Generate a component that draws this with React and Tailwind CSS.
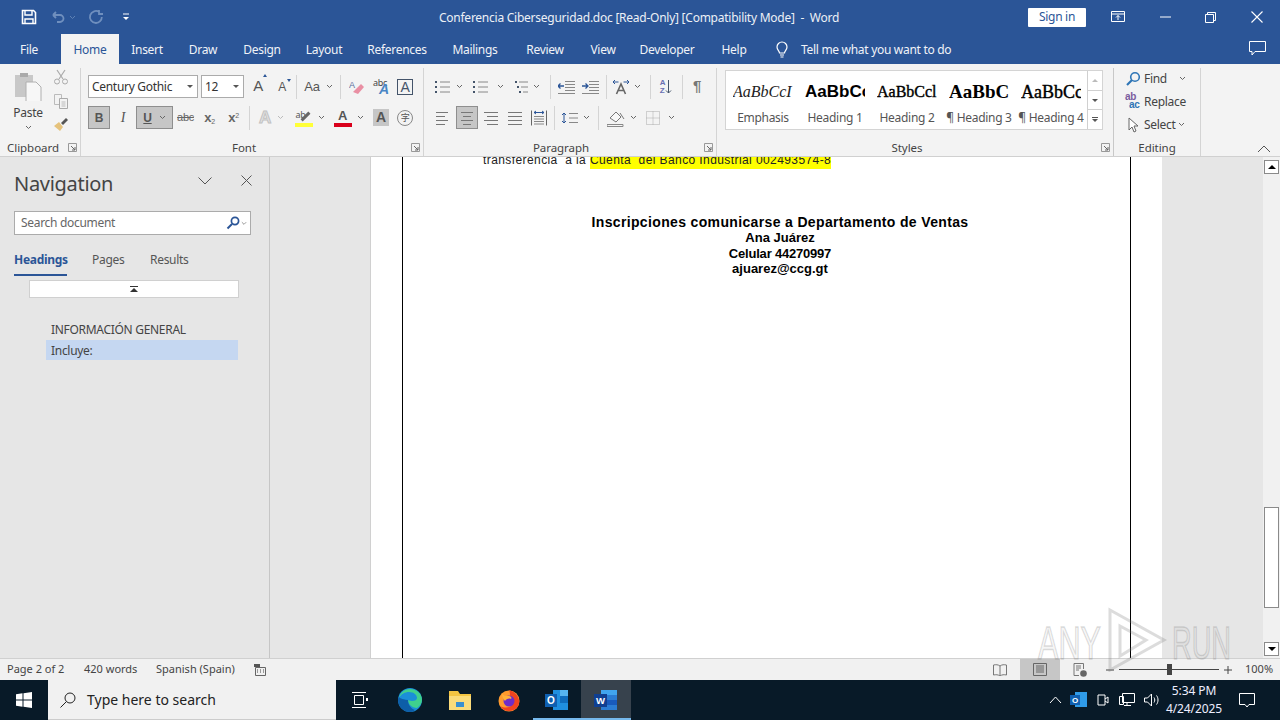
import React from "react";

const S = ({ w = 16, h = 16, vb, children, className = "" }) => (
  <svg width={w} height={h} viewBox={vb || `0 0 ${w} ${h}`} fill="none" className={"block shrink-0 " + className}>{children}</svg>
);
const Chev = ({ c = "#666", w = 7 }) => (
  <S w={w} h={5} vb="0 0 7 5"><path d="M1 1l2.5 2.5L6 1" stroke={c} strokeWidth="1" /></S>
);
const SepSm = () => <div className="w-px h-[24px] bg-[#d4d4d4]" />;
const GLabel = ({ children, launcher }) => (
  <div className="h-[18px] pt-[2px] flex items-center justify-center relative text-[11.5px] text-[#444] tracking-[-0.05px]">
    {children}
    {launcher && (
      <span className="absolute right-[3px] top-[5px]">
        <S w={9} h={9}><path d="M.5 8.5v-8h8v8z" stroke="#999" /><path d="M3 3l4 4M7 4v3H4" stroke="#666" /></S>
      </span>
    )}
  </div>
);

const Lines = ({ x1 = [2, 2, 2, 2], x2 = [16, 16, 16, 16], c = "#777" }) => (
  <S w={18} h={16}>
    {[2.5, 6.5, 10.5, 14.5].map((y, i) => <path key={i} d={`M${x1[i]} ${y}H${x2[i]}`} stroke={c} />)}
  </S>
);

function Title() {
  return (
    <div className="h-[34px] bg-[#2b5597] flex items-center text-white shrink-0">
      <div className="w-[21px]" />
      <div className="w-[16px] flex justify-center">
        <S w={16} h={16}>
          <path d="M1.5 1.5h11l2 2v11h-13z" stroke="#fff" strokeWidth="1.6" />
          <path d="M4 2v4h7V2M4 14.5V10h8v4.5" stroke="#fff" strokeWidth="1.4" />
        </S>
      </div>
      <div className="w-[13px]" />
      <S w={16} h={14}><path d="M3 5h7a3.5 3.5 0 010 7H7M3 5l3-3M3 5l3 3" stroke="#6f8fbe" strokeWidth="1.8" /></S>
      <div className="w-[3px]" />
      <Chev c="#5f82b5" />
      <div className="w-[12px]" />
      <S w={16} h={16}><path d="M11.5 3.2A6 6 0 108 14a6 6 0 005.8-6M11 1v4h4" stroke="#6f8fbe" strokeWidth="1.8" /></S>
      <div className="w-[18px]" />
      <S w={8} h={8}><path d="M1 1h6" stroke="#fff" /><path d="M1 4l3 3 3-3z" fill="#fff" /></S>
      <div className="w-[308px]" />
      <div className="w-[402px] pt-[1px] text-center text-[12px] text-[#ecf0f6] whitespace-nowrap tracking-[-0.25px]">
        Conferencia Ciberseguridad.doc [Read-Only] [Compatibility Mode]&nbsp; -&nbsp; Word
      </div>
      <div className="w-[188px]" />
      <div className="w-[58px] h-[19px] bg-white rounded-[1px] text-[#2b5597] text-[12px] flex items-center justify-center">Sign in</div>
      <div className="w-[25px]" />
      <S w={14} h={12}><path d="M.5.5h13v10H.5zM.5 3h13M7 9V4.5M5 6.5l2-2 2 2" stroke="#fff" /></S>
      <div className="w-[35px]" />
      <S w={11} h={2}><path d="M0 1h11" stroke="#fff" /></S>
      <div className="w-[34px]" />
      <S w={11} h={11}><path d="M.5 2.5h8v8h-8zM2.5 2.5v-2h8v8h-2" stroke="#fff" /></S>
      <div className="w-[35px]" />
      <S w={12} h={12}><path d="M.5.5l11 11M11.5.5l-11 11" stroke="#fff" strokeWidth="1.1" /></S>
    </div>
  );
}

function Tabs() {
  return (
    <div className="h-[30px] bg-[#2b5597] flex text-[12px] text-[#f0f3f8] whitespace-nowrap shrink-0">
      <div className="w-[58px] text-center pt-[7px]">File</div>
      <div className="w-[3px]" />
      <div className="w-[58px] text-center pt-[7px] bg-[#f3f3f3] text-[#2b5597]">Home</div>
      <div className="w-[56px] text-center pt-[7px]">Insert</div>
      <div className="w-[56px] text-center pt-[7px]">Draw</div>
      <div className="w-[62px] text-center pt-[7px]">Design</div>
      <div className="w-[62px] text-center pt-[7px]">Layout</div>
      <div className="w-[84px] text-center pt-[7px]">References</div>
      <div className="w-[72px] text-center pt-[7px]">Mailings</div>
      <div className="w-[68px] text-center pt-[7px]">Review</div>
      <div className="w-[48px] text-center pt-[7px]">View</div>
      <div className="w-[80px] text-center pt-[7px]">Developer</div>
      <div className="w-[54px] text-center pt-[7px]">Help</div>
      <div className="w-[14px]" />
      <div className="pt-[7px]">
        <S w={14} h={17}><path d="M4.5 12c0-2-2.5-3-2.5-6a5 5 0 0110 0c0 3-2.5 4-2.5 6zM5 14h4M5.5 16h3" stroke="#fff" strokeWidth="1.2" /></S>
      </div>
      <div className="w-[12px]" />
      <div className="pt-[7px]">Tell me what you want to do</div>
      <div className="w-[298px]" />
      <div className="pt-[7px]">
        <S w={17} h={15}><path d="M.5.5h16v10H6l-3 3.5v-3.500H.5z" stroke="#fff" /></S>
      </div>
    </div>
  );
}

function Clipboard() {
  return (
    <div className="w-[81px] h-[88px] border-r border-[#d4d4d4] flex flex-col shrink-0 mt-[4px]">
      <div className="h-[70px] flex">
        <div className="w-[50px] pl-[6px] flex flex-col items-center pt-[3px]">
          <S w={30} h={30}>
            <path d="M2 4h18v22H2z" fill="#c8c8c8" />
            <path d="M7 2h8v4H7z" fill="#aaa" />
            <path d="M13 11h10l5 5v15H13z" fill="#f7f7f7" stroke="#b0b0b0" />
          </S>
          <div className="text-[12px] text-[#444] leading-[16px] mt-[4px]">Paste</div>
          <div className="mt-[4px]"><Chev /></div>
        </div>
        <div className="flex flex-col items-center gap-[7.500px] ml-[3px] pt-[1px]">
          <S w={16} h={16}><path d="M4 1l6 9M12 1l-6 9" stroke="#aaa" strokeWidth="1.2" /><circle cx="4" cy="12.500" r="2.500" stroke="#aaa" /><circle cx="12" cy="12.500" r="2.500" stroke="#aaa" /></S>
          <S w={16} h={16}><path d="M1.500 1.500h7v10h-7z" stroke="#bbb" /><path d="M6.500 5.500h8v10h-8z" fill="#f3f3f3" stroke="#aaa" /><path d="M8.500 9h4M8.500 11h4M8.500 13h4" stroke="#bbb" /></S>
          <S w={16} h={16}><path d="M1 10l5-4 4 5-3 4z" fill="#e5c27c" /><path d="M8 7l5-5 2 2-5 5z" fill="#555" /></S>
        </div>
      </div>
      <GLabel launcher><span className="-ml-[14px]">Clipboard</span></GLabel>
    </div>
  );
}

const Cell = ({ className = "", children }) => <div className={"flex items-center justify-center shrink-0 h-[22px] " + className}>{children}</div>;
const FA = ({ children, className = "" }) => <span className={"font-['Liberation_Sans',sans-serif] " + className}>{children}</span>;

function Font() {
  return (
    <div className="w-[343px] h-[88px] border-r border-[#d4d4d4] flex flex-col shrink-0 mt-[4px]">
      <div className="h-[70px] flex flex-col pl-[7px]">
        <div className="flex items-center h-[23px] mt-[7px]">
          <div className="w-[110px] h-[23px] bg-white border border-[#ababab] flex items-center px-[3px] text-[12px] text-[#333] justify-between shrink-0">
            Century Gothic <span className="w-0 h-0 border-x-[3px] border-x-transparent border-t-[3px] border-t-[#555] mr-[1px]" />
          </div>
          <div className="w-[3px]" />
          <div className="w-[43px] h-[23px] bg-white border border-[#ababab] flex items-center px-[3px] text-[12px] text-[#333] justify-between shrink-0">
            12 <span className="w-0 h-0 border-x-[3px] border-x-transparent border-t-[3px] border-t-[#555] mr-[1px]" />
          </div>
          <div className="w-[2px]" />
          <Cell className="w-[24px]"><FA className="text-[15px] text-[#555] relative">A<span className="absolute -right-[4px] -top-[1px] w-0 h-0 border-x-[2.500px] border-x-transparent border-b-[3px] border-b-[#2b5597]" /></FA></Cell>
          <Cell className="w-[24px]"><FA className="text-[12px] text-[#555] relative">A<span className="absolute -right-[5px] top-[1px] w-0 h-0 border-x-[2.500px] border-x-transparent border-t-[3px] border-t-[#2b5597]" /></FA></Cell>
          <Cell className="w-[4px]"><SepSm /></Cell>
          <Cell className="w-[28px] text-[13px] text-[#555]"><FA>Aa</FA></Cell>
          <Cell className="w-[6px]"><Chev /></Cell>
          <Cell className="w-[8px]" />
          <Cell className="w-[1px]"><SepSm /></Cell>
          <Cell className="w-[4px]" />
          <Cell className="w-[24px]">
            <S w={16} h={16}><path d="M4 13l8-8 3 3-6 7z" fill="#e98fa3" /><text x="0" y="9" fontSize="9" fill="#5a6e9e" fontFamily="Liberation Sans">A</text></S>
          </Cell>
          <Cell className="w-[24px]">
            <div className="relative w-[16px] h-[18px]"><span className="absolute left-0 -top-[2px] text-[9px] text-[#444]">abc</span><FA className="absolute left-[6px] top-[5px] text-[14px] font-bold italic text-[#4a86c5] leading-[13px]">A</FA></div>
          </Cell>
          <Cell className="w-[24px]">
            <div className="w-[16px] h-[16px] border border-[#44546a] flex items-center justify-center"><FA className="text-[14px] text-[#44546a] leading-none">A</FA></div>
          </Cell>
        </div>
        <div className="flex items-center h-[23px] mt-[8px]">
          <Cell className="w-[22px] h-[23px] bg-[#c6c6c6] border border-[#8e8e8e]"><FA className="text-[12px] font-bold text-[#555]">B</FA></Cell>
          <Cell className="w-[26px]"><span className="font-['Liberation_Serif',serif] italic text-[14px] text-[#555]">I</span></Cell>
          <Cell className="w-[37px] h-[23px] bg-[#c6c6c6] border border-[#8e8e8e] gap-[7px]"><FA className="text-[12px] font-bold underline text-[#555]">U</FA><Chev /></Cell>
          <Cell className="w-[25px]"><FA className="text-[11px] line-through text-[#666]">abc</FA></Cell>
          <Cell className="w-[23px]"><FA className="text-[13px] font-bold text-[#666]">x<sub className="text-[7px] font-normal">2</sub></FA></Cell>
          <Cell className="w-[25px]"><FA className="text-[13px] font-bold text-[#666]">x<sup className="text-[7px] font-normal">2</sup></FA></Cell>
          <Cell className="w-[7px]"><SepSm /></Cell>
          <Cell className="w-[24px]"><FA className="text-[17px] font-bold text-[#e3e3e3] [-webkit-text-stroke:1px_#c2c2c2]">A</FA></Cell>
          <Cell className="w-[6px]"><Chev c="#bbb" /></Cell>
          <Cell className="w-[7px]" />
          <Cell className="w-[27px]">
            <div className="relative w-[18px] h-[18px]"><span className="absolute left-[1px] -top-[1px] text-[9px] text-[#555]">ab</span><span className="absolute left-[9px] top-[2px] w-[3px] h-[11px] bg-[#666] rotate-45" /><span className="absolute left-0 bottom-0 w-[18px] h-[4px] bg-[#ffff38]" /></div>
          </Cell>
          <Cell className="w-[9px]"><Chev /></Cell>
          <Cell className="w-[3px]" />
          <Cell className="w-[27px]">
            <div className="relative w-[18px] h-[18px] flex justify-center"><FA className="text-[13px] font-bold text-[#555] leading-[14px]">A</FA><span className="absolute left-0 bottom-0 w-[18px] h-[4px] bg-[#d9001b]" /></div>
          </Cell>
          <Cell className="w-[9px]"><Chev /></Cell>
          <Cell className="w-[4px]" />
          <Cell className="w-[24px]"><div className="w-[16px] h-[17px] bg-[#c6c6c6] flex items-center justify-center"><FA className="text-[14px] font-bold text-[#555]">A</FA></div></Cell>
          <Cell className="w-[24px]"><div className="w-[16px] h-[16px] rounded-full border border-[#888] flex items-center justify-center text-[9px] text-[#555] font-['Noto_Sans_CJK_SC',sans-serif]">字</div></Cell>
        </div>
      </div>
      <GLabel launcher><span className="-ml-[16px]">Font</span></GLabel>
    </div>
  );
}

const ListIc = ({ kind }) => (
  <S w={16} h={14}>
    {[2, 7, 12].map((y, i) => <rect key={i} x={kind === 2 ? 2 + i * 2 : 0} y={y - 1} width="2" height="2" fill="#44546a" />)}
    {[2, 7, 12].map((y, i) => <path key={i} d={`M${kind === 2 ? 6 + i * 2 : 5} ${y}H15`} stroke="#888" />)}
  </S>
);
const Indent = ({ dir }) => (
  <S w={17} h={14}>
    <path d="M7 1.500h10M7 4.500h10M7 7.500h10M7 10.500h10M0 13.500h17" stroke="#888" />
    <path d={dir ? "M0 6h6M3.500 3.500L6 6 3.500 8.500" : "M6 6H0M2.500 3.500L0 6l2.500 2.500"} stroke="#2b5597" strokeWidth="1.300" />
  </S>
);

function Paragraph() {
  return (
    <div className="w-[293px] h-[88px] border-r border-[#d4d4d4] flex flex-col shrink-0 mt-[4px]">
      <div className="h-[70px] flex flex-col">
        <div className="flex items-center h-[23px] mt-[7px] pl-[8px]">
          <Cell className="w-[22px]"><ListIc kind={0} /></Cell>
          <Cell className="w-[10px]"><Chev /></Cell>
          <Cell className="w-[6px]" />
          <Cell className="w-[22px]"><ListIc kind={1} /></Cell>
          <Cell className="w-[16px]"><Chev /></Cell>
          <Cell className="w-[3px]" />
          <Cell className="w-[20px]"><ListIc kind={2} /></Cell>
          <Cell className="w-[10px]"><Chev /></Cell>
          <Cell className="w-[7px]" />
          <Cell className="w-[4px]"><SepSm /></Cell>
          <Cell className="w-[2px]" />
          <Cell className="w-[24px]"><Indent /></Cell>
          <Cell className="w-[24px]"><Indent dir /></Cell>
          <Cell className="w-[8px]"><SepSm /></Cell>
          <Cell className="w-[22px]">
            <S w={18} h={16}>
              <path d="M4.500 15L9 5l4.500 10M6 11.500h6" stroke="#666" strokeWidth="1.600" />
              <path d="M6.500 3H1M3 1L1 3l2 2M11.500 3H17M15 1l2 2-2 2" stroke="#2b5597" />
            </S>
          </Cell>
          <Cell className="w-[10px]"><Chev /></Cell>
          <Cell className="w-[16px]"><SepSm /></Cell>
          <Cell className="w-[16px]">
            <div className="flex items-center"><div className="flex flex-col text-[8px] font-bold text-[#6a6fb2] leading-[8px]"><FA>A</FA><FA>Z</FA></div><S w={7} h={16}><path d="M3.500 1v13M1 11.500L3.500 14 6 11.500" stroke="#44546a" /></S></div>
          </Cell>
          <Cell className="w-[16px]"><SepSm /></Cell>
          <Cell className="w-[14px]"><FA className="text-[15px] font-bold text-[#777]">¶</FA></Cell>
        </div>
        <div className="flex items-center h-[23px] mt-[8px] pl-[8px]">
          <Cell className="w-[22px]"><Lines x2={[14, 11, 14, 11]} /></Cell>
          <Cell className="w-[2px]" />
          <Cell className="w-[22px] h-[23px] bg-[#c6c6c6] border border-[#8e8e8e]"><Lines x1={[3, 5, 3, 5]} x2={[15, 13, 15, 13]} /></Cell>
          <Cell className="w-[2px]" />
          <Cell className="w-[22px]"><Lines x1={[2, 5, 2, 5]} /></Cell>
          <Cell className="w-[2px]" />
          <Cell className="w-[22px]"><Lines /></Cell>
          <Cell className="w-[2px]" />
          <Cell className="w-[22px]">
            <S w={16} h={16}><path d="M.500.500v15M15.500.500v15" stroke="#666" /><path d="M3 2.500h10M5 1l-2 1.500L5 4M11 1l2 1.500L11 4" stroke="#2b5597" /><path d="M3 6.500h10M3 9h10M3 11.500h10M3 14h10" stroke="#888" /></S>
          </Cell>
          <Cell className="w-[9px]"><SepSm /></Cell>
          <Cell className="w-[22px]">
            <S w={18} h={16}><path d="M3 3v10M1 5l2-2 2 2M1 11l2 2 2-2" stroke="#2b5597" /><path d="M8 3.500h9M8 8h9M8 12.500h9" stroke="#888" /></S>
          </Cell>
          <Cell className="w-[10px]"><Chev /></Cell>
          <Cell className="w-[14px]"><SepSm /></Cell>
          <Cell className="w-[22px]">
            <S w={18} h={18}><path d="M3 9l6-6 5 5-5 5z" stroke="#777" fill="#f8f8f8" /><path d="M13 4l4 6" stroke="#777" /><path d="M0 15.500h16v2H0z" fill="#f5f5f5" stroke="#888" /></S>
          </Cell>
          <Cell className="w-[13px]"><Chev /></Cell>
          <Cell className="w-[5px]" />
          <Cell className="w-[16px]">
            <S w={14} h={14}><path d="M.500.500h13v13H.500zM7 .500v13M.500 7h13" stroke="#aaa" strokeDasharray="1 1" /></S>
          </Cell>
          <Cell className="w-[7px]" />
          <Cell className="w-[7px]"><Chev /></Cell>
        </div>
      </div>
      <GLabel launcher><span className="-ml-[18px]">Paragraph</span></GLabel>
    </div>
  );
}

const SB = ({ children }) => <div className="w-[14px] flex-1 border-t border-[#d0d0d0] first:border-t-0 flex items-center justify-center">{children}</div>;
const Style = ({ pv, cls, label }) => (
  <div className="w-[72px] shrink-0 flex flex-col items-center overflow-hidden">
    <div className={"h-[34px] w-[60px] overflow-hidden flex items-center justify-start whitespace-nowrap " + cls}>{pv}</div>
    <div className="text-[12px] text-[#555] whitespace-nowrap leading-[16px] mt-[1px]">{label}</div>
  </div>
);

function Styles() {
  return (
    <div className="w-[397px] h-[88px] border-r border-[#c8c8c8] flex flex-col shrink-0 mt-[4px]">
      <div className="h-[70px] pl-[8px] pt-[2px]">
        <div className="w-[378px] h-[60px] bg-white border border-[#d4d4d4] flex">
          <div className="flex-1 flex pl-[1px] pt-[4px]">
            <Style label="Emphasis" cls="font-['Liberation_Serif',serif] italic text-[16px] text-[#222] tracking-normal" pv="AaBbCcI" />
            <Style label="Heading 1" cls="font-['Liberation_Sans',sans-serif] font-bold text-[17px] text-black tracking-normal" pv="AaBbCc" />
            <Style label="Heading 2" cls="font-['Liberation_Serif',serif] text-[16px] text-black tracking-normal [-webkit-text-stroke:0.4px_#000]" pv="AaBbCcl" />
            <Style label="¶ Heading 3" cls="font-['Liberation_Serif',serif] font-bold text-[19px] text-black tracking-normal" pv="AaBbC" />
            <Style label="¶ Heading 4" cls="font-['Liberation_Serif',serif] text-[18px] text-black tracking-normal [-webkit-text-stroke:0.4px_#000]" pv="AaBbCc" />
          </div>
          <div className="w-[15px] border-l border-[#d0d0d0] flex flex-col">
            <SB><span className="w-0 h-0 border-x-[3px] border-x-transparent border-b-[3px] border-b-[#bbb]" /></SB>
            <SB><span className="w-0 h-0 border-x-[3px] border-x-transparent border-t-[3px] border-t-[#555]" /></SB>
            <SB><div className="flex flex-col items-center gap-[1px]"><span className="w-[6px] h-px bg-[#555]" /><span className="w-0 h-0 border-x-[3px] border-x-transparent border-t-[3px] border-t-[#555]" /></div></SB>
          </div>
        </div>
      </div>
      <GLabel launcher><span className="-ml-[16px]">Styles</span></GLabel>
    </div>
  );
}

function Editing() {
  return (
    <div className="w-[87px] h-[88px] border-r border-[#d4d4d4] flex flex-col shrink-0 mt-[4px]">
      <div className="h-[70px] flex flex-col pl-[11px] text-[12px] text-[#444] -mt-[1px]">
        <div className="h-[23px] flex items-center whitespace-nowrap">
          <S w={16} h={16}><circle cx="10" cy="6" r="4.300" stroke="#2e75b6" strokeWidth="1.600" /><path d="M7 9l-5 5" stroke="#2e75b6" strokeWidth="2.200" /></S>
          <span className="ml-[3px]">Find</span>
          <span className="ml-[12px]"><Chev /></span>
        </div>
        <div className="h-[23px] flex items-center whitespace-nowrap">
          <div className="w-[16px] text-[10px] leading-[8px] font-bold -mt-[1px] font-['Liberation_Sans',sans-serif]"><div className="text-[#7a5c9e]">ab</div><div className="text-[#2e75b6] pl-[4px]">ac</div></div>
          <span className="ml-[3px]">Replace</span>
        </div>
        <div className="h-[23px] flex items-center whitespace-nowrap">
          <span className="ml-[3px]"><S w={11} h={16}><path d="M1 1v12l3-3 2 5 2-1-2-5h4z" stroke="#666" fill="#fff" /></S></span>
          <span className="ml-[5px]">Select</span>
          <span className="ml-[2px]"><Chev /></span>
        </div>
      </div>
      <div className="mt-[1px]"><GLabel>Editing</GLabel></div>
    </div>
  );
}

function Ribbon() {
  return (
    <div className="h-[93px] bg-[#f3f3f3] border-b border-[#d0d0d0] flex shrink-0">
      <Clipboard />
      <Font />
      <Paragraph />
      <Styles />
      <Editing />
      <div className="flex-1 flex justify-end items-end pb-[3px] pr-[9px]">
        <S w={14} h={8}><path d="M1 7l6-6 6 6" stroke="#555" /></S>
      </div>
    </div>
  );
}

function NavPane() {
  return (
    <div className="w-[270px] bg-[#e6e6e6] border-r border-[#c6c6c6] shrink-0 flex flex-col">
      <div className="h-[54px] flex items-start pl-[14px] pt-[13px]">
        <div className="text-[20px] leading-[28px] text-[#444] w-[184px]">Navigation</div>
        <div className="pt-[7px]"><S w={14} h={8}><path d="M.500.500L7 7 13.500.500" stroke="#555" /></S></div>
        <div className="w-[29px]" />
        <div className="pt-[5px]"><S w={11} h={11}><path d="M.500.500l10 10M10.500.500l-10 10" stroke="#555" /></S></div>
      </div>
      <div className="ml-[14px] w-[237px] h-[24px] bg-white border border-[#ababab] flex items-center pl-[6px] pr-[3px] text-[12px] text-[#666]">
        <span className="flex-1 -mt-[1px]">Search document</span>
        <S w={14} h={14}><circle cx="9" cy="5" r="3.600" stroke="#2b5597" strokeWidth="1.700" /><path d="M6 8l-4.500 4.500" stroke="#2b5597" strokeWidth="2" /></S>
        <span className="ml-[1px]"><Chev c="#888" w={6} /></span>
      </div>
      <div className="flex h-[39px] pl-[14px] pt-[16px] text-[12px] text-[#555]">
        <div className="w-[78px] font-bold text-[#2b5597]">Headings</div>
        <div className="w-[58px]">Pages</div>
        <div>Results</div>
      </div>
      <div className="ml-[14px] w-[53px] h-[2px] bg-[#2b5597]" />
      <div className="ml-[29px] mt-[4px] w-[210px] h-[18px] bg-white border border-[#d0d0d0] flex items-center justify-center">
        <S w={8} h={7}><path d="M0 .500h8" stroke="#333" /><path d="M4 2l4 4H0z" fill="#333" /></S>
      </div>
      <div className="ml-[51px] mt-[22px] text-[12px] leading-[20px] text-[#444] whitespace-nowrap">INFORMACIÓN GENERAL</div>
      <div className="ml-[46px] w-[192px] h-[20px] bg-[#c5d7f1] pl-[5px] text-[12px] leading-[21px] text-[#444]">Incluye:</div>
    </div>
  );
}

function Doc() {
  return (
    <div className="flex-1 bg-[#e6e6e6] flex min-w-0 overflow-hidden">
      <div className="w-[100px] shrink-0" />
      <div className="w-[792px] bg-white border-l border-[#d0d0d0] shrink-0 pl-[31px] pr-[31px]">
        <div className="h-full border-x border-black pl-[80px] pr-[53px] font-['Liberation_Sans',sans-serif] text-black overflow-hidden tracking-normal">
          <div className="-mt-[5px] h-[16px] leading-[16px] text-[12px] text-[#222] whitespace-nowrap tracking-[0.41px]">
            transferencia&nbsp; a la <span className="bg-[#ffff00] pb-[2px]">Cuenta&nbsp; del Banco Industrial 002493574-8</span>
          </div>
          <div className="mt-[46px] text-center font-bold text-[14px] leading-[16px] tracking-[0.35px] whitespace-nowrap">Inscripciones comunicarse a Departamento de Ventas</div>
          <div className="text-center font-bold text-[13px] leading-[15.500px] whitespace-nowrap">Ana Juárez</div>
          <div className="text-center font-bold text-[13px] leading-[15.500px] whitespace-nowrap tracking-[-0.2px]">Celular 44270997</div>
          <div className="text-center font-bold text-[13px] leading-[15.500px] whitespace-nowrap">ajuarez@ccg.gt</div>
        </div>
      </div>
      <div className="flex-1" />
      <div className="w-[17px] bg-[#f1f1f1] shrink-0 flex flex-col items-center pt-[3px] pb-[2px]">
        <div className="w-[15px] h-[14px] bg-white border border-[#8a8a8a] flex items-center justify-center"><span className="w-0 h-0 border-x-[4px] border-x-transparent border-b-[4px] border-b-black" /></div>
        <div className="h-[333px]" />
        <div className="w-[15px] h-[101px] bg-white border border-[#8a8a8a]" />
        <div className="flex-1" />
        <div className="w-[15px] h-[14px] bg-white border border-[#8a8a8a] flex items-center justify-center"><span className="w-0 h-0 border-x-[4px] border-x-transparent border-t-[4px] border-t-black" /></div>
      </div>
    </div>
  );
}

function Status() {
  return (
    <div className="h-[22px] bg-[#f1f1f1] border-t border-[#d0d0d0] flex items-center text-[11px] text-[#444] shrink-0 whitespace-nowrap tracking-normal">
      <div className="w-[7px]" />
      <div className="w-[77px]">Page 2 of 2</div>
      <div className="w-[72px]">420 words</div>
      <div className="w-[98px]">Spanish (Spain)</div>
      <S w={12} h={12}><path d="M1.500 3.500h10v8h-10z" stroke="#666" /><path d="M0 0h6v3H0z" fill="#555" /><path d="M3 6h1M6 6h1M9 6h1M3 8h1M6 8h1M9 8h1" stroke="#444" /></S>
      <div className="w-[727px]" />
      <S w={14} h={12}><path d="M7 2C5 .500 3 .500 .500 1v10c2.500-.500 4.500-.500 6.500 1 2-1.500 4-1.500 6.500-1V1C11 .500 9 .500 7 2zM7 2v10" stroke="#777" /></S>
      <div className="w-[13px]" />
      <div className="w-[40px] h-[21px] bg-[#c6c6c6] flex items-center justify-center">
        <S w={14} h={13}><path d="M.500.500h13v12H.500zM3 3h8M3 5h8M3 7h8M3 9h8" stroke="#666" /></S>
      </div>
      <div className="w-[13px]" />
      <S w={14} h={14}><path d="M10.500 6V.500H1v12h5M3 3h5M3 5h5M3 7h3" stroke="#777" /><circle cx="10.500" cy="10.500" r="3.300" fill="#666" /></S>
      <div className="w-[19px]" />
      <S w={8} h={2}><path d="M0 1h8" stroke="#444" /></S>
      <div className="w-[5px]" />
      <div className="w-[100px] h-px bg-[#444] relative">
        <span className="absolute left-[48px] -top-[5px] w-[5px] h-[11px] bg-[#444]" />
      </div>
      <div className="w-[5px]" />
      <S w={8} h={8}><path d="M0 4h8M4 0v8" stroke="#444" /></S>
      <div className="w-[13px]" />
      <div>100%</div>
    </div>
  );
}

function Taskbar() {
  return (
    <div className="h-[40px] bg-[#081a28] flex items-stretch shrink-0 text-white tracking-normal">
      <div className="w-[48px] flex items-center justify-center">
        <S w={16} h={16}><path d="M0 2.300l6.500-1V7.500H0zM7.500 1.200L16 0v7.500H7.500zM0 8.500h6.500v6.200l-6.500-1zM7.500 8.500H16V16l-8.500-1.200z" fill="#fff" /></S>
      </div>
      <div className="w-[288px] bg-[#f1f1f1] flex items-center pl-[12px] text-[#222] text-[14px] border-b border-[#ccc]">
        <S w={16} h={16}><circle cx="10" cy="6" r="5" stroke="#222" /><path d="M6.500 9.500L.500 15.500" stroke="#222" /></S>
        <span className="ml-[11px]">Type here to search</span>
      </div>
      <div className="w-[48px] flex items-center justify-center">
        <S w={16} h={16}><path d="M2.500 3.500h9v9h-9zM0 .500h14M0 15.500h14" stroke="#fff" /><rect x="14" y="6" width="2" height="3" fill="#fff" /></S>
      </div>
      <div className="w-[51px] flex items-center justify-center">
        <S w={24} h={24}>
          <circle cx="12" cy="12" r="12" fill="#1b8fd8" />
          <path d="M24 12c0-7-6-11-12-11S2 5 1 10c2-4 6-6 10-6 5 0 8 3 8 6 0 2-2 3-5 3-2 0-4-1-4-1 0 4 4 8 9 8 3-2 5-5 5-8z" fill="#3fd08d" />
          <path d="M10 12c0 4 2 8 7 10-2 1.500-3 2-5 2C5 24 0 18 0 12c0-2 .500-3 1-3 1 1 2 2 9 3z" fill="#0d5ea8" />
        </S>
      </div>
      <div className="w-[49px] flex items-center justify-center">
        <S w={22} h={20}>
          <path d="M0 1h9l2 3h11v16H0z" fill="#f4c542" />
          <path d="M0 6h22v14H0z" fill="#fbdc7a" />
          <path d="M7 12h8v5H7z" fill="#3a90d0" />
        </S>
      </div>
      <div className="w-[49px] flex items-center justify-center">
        <S w={24} h={24}>
          <circle cx="12" cy="13" r="10.500" fill="#ff9a2e" />
          <path d="M12 2c4 1 9 4 10 10 1 6-3 11-10 11-4 0-7-2-9-5 4 2 8 2 11 0 3-3 2-7-1-9 0-3 0-5-1-7z" fill="#f0441f" />
          <circle cx="12" cy="13" r="5.500" fill="#6e2cc8" />
          <path d="M5 5c1 3 4 3 7 3 2 0 3 2 2 3-2-1-5 0-6 2-2-2-3-5-3-8z" fill="#ffb13b" />
        </S>
      </div>
      <div className="w-[48px] flex items-center justify-center border-b-[2px] border-[#76b9ed] pt-[2px]">
        <S w={24} h={22}>
          <path d="M8 1h15v20H8z" fill="#1f8fe0" />
          <path d="M15 1h8v6h-8z" fill="#56b4f0" />
          <path d="M15 7h8v7h-8z" fill="#0f6cbd" />
          <path d="M0 5h12v13H0z" fill="#0f5fb0" />
          <text x="6" y="15" textAnchor="middle" fontSize="10" fontWeight="700" fill="#fff" fontFamily="Liberation Sans">O</text>
        </S>
      </div>
      <div className="w-[50px] bg-[#37424d] flex items-center justify-center border-b-[2px] border-[#76b9ed] pt-[2px]">
        <S w={24} h={22}>
          <path d="M7 1h16v20H7z" fill="#2b7cd3" />
          <path d="M7 1h16v5H7z" fill="#41a5ee" />
          <path d="M7 11h16v5H7z" fill="#185abd" />
          <path d="M0 5h13v13H0z" fill="#103f91" />
          <text x="6.500" y="15" textAnchor="middle" fontSize="9.500" fontWeight="700" fill="#fff" fontFamily="Liberation Sans">W</text>
        </S>
      </div>
      <div className="w-[418px]" />
      <div className="w-[13px] flex items-center"><S w={13} h={8}><path d="M1 7l5.500-6L12 7" stroke="#fff" /></S></div>
      <div className="w-[8px]" />
      <div className="w-[18px] flex items-center">
        <S w={17} h={16}><path d="M5 0h12v15H5z" fill="#2f9be8" /><path d="M0 3h10v10H0z" fill="#0f5fb0" /><text x="5" y="11" textAnchor="middle" fontSize="8" fontWeight="700" fill="#fff" fontFamily="Liberation Sans">O</text></S>
      </div>
      <div className="w-[9px]" />
      <div className="w-[13px] flex items-center"><S w={12} h={16}><path d="M1 3h7v10H1zM8 7l3-2v6l-3-2" stroke="#fff" /></S></div>
      <div className="w-[9px]" />
      <div className="w-[17px] flex items-center"><S w={16} h={14}><path d="M3.500.500h12v9h-12zM.500 3.500h4v8h-4zM8 9.500v3M5 12.500h7" stroke="#fff" /></S></div>
      <div className="w-[8px]" />
      <div className="w-[15px] flex items-center"><S w={15} h={14}><path d="M.500 5h3l4-4v12l-4-4h-3z" stroke="#fff" /><path d="M10 4.500c1 1.500 1 3.500 0 5M12.500 2.500c2 2.500 2 6.500 0 9" stroke="#fff" /></S></div>
      <div className="w-[7px]" />
      <div className="w-[56px] flex flex-col items-center justify-center text-[12px] leading-[18px] text-[#eef] tracking-[-0.1px] whitespace-nowrap">
        <div>5:34 PM</div>
        <div>4/24/2025</div>
      </div>
      <div className="w-[17px]" />
      <div className="w-[17px] flex items-center"><S w={16} h={15}><path d="M.500.500h15v11H10l-2 2.500-2-2.500H.500z" stroke="#fff" /></S></div>
      <div className="flex-1" />
    </div>
  );
}

function Watermark() {
  return (
    <div className="absolute left-[1038px] top-[606px] w-[200px] h-[66px] pointer-events-none flex items-center font-['Liberation_Sans',sans-serif] text-[47px] leading-none tracking-normal text-[rgba(120,120,120,0.08)] [-webkit-text-stroke:1.5px_rgba(120,120,120,0.26)]">
      <span className="w-[70px] shrink-0 mt-[6px] whitespace-nowrap scale-x-[0.65] origin-left">ANY</span>
      <span className="w-[60px] shrink-0">
        <S w={60} h={66}>
          <path d="M2 4l54 30-54 30zM12 20l26 14-26 16z" stroke="rgba(120,120,120,0.26)" strokeWidth="3" />
        </S>
      </span>
      <span className="ml-[4px] whitespace-nowrap mt-[6px] scale-x-[0.58] origin-left">RUN</span>
    </div>
  );
}

export default function App() {
  return (
    <div className="relative w-[1280px] h-[720px] overflow-hidden flex flex-col font-['Noto_Sans',sans-serif] tracking-[-0.3px]">
      <Title />
      <Tabs />
      <Ribbon />
      <div className="flex-1 flex min-h-0">
        <NavPane />
        <Doc />
      </div>
      <Status />
      <Taskbar />
      <Watermark />
    </div>
  );
}
